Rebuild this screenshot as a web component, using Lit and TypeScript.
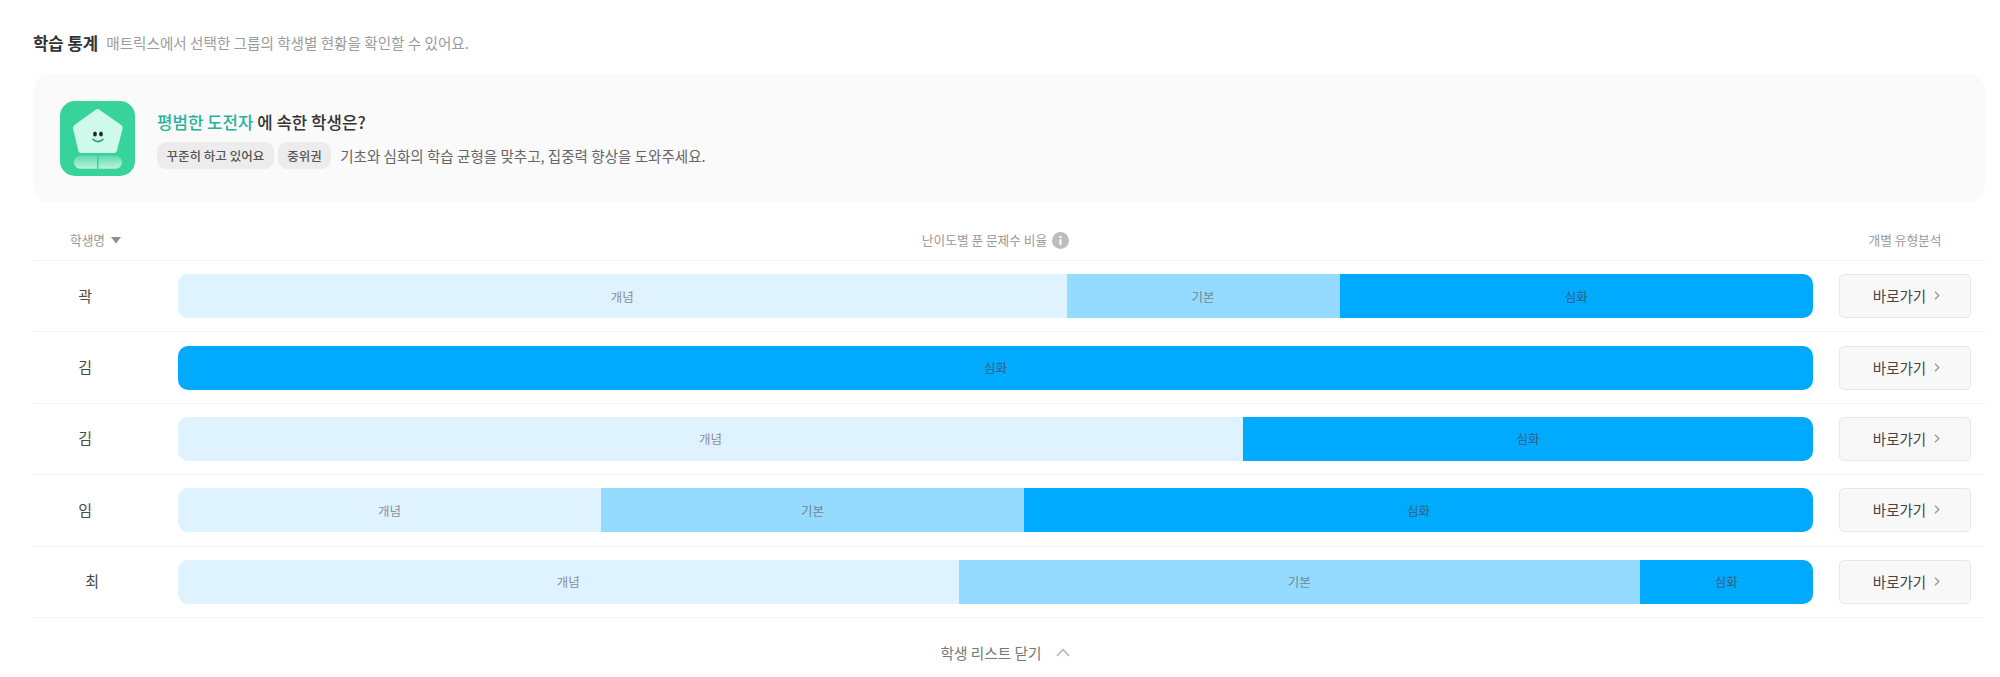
import { LitElement, css, html, svg } from 'lit'
import { customElement } from 'lit/decorators.js'

interface Segment {
  label: string
  level: 'low' | 'mid' | 'high'
  ratio: number
}

interface Student {
  name: string
  // width of the blanked-out part of the name, in characters
  masked: 1 | 2
  segments: Segment[]
}

const concept = (ratio: number): Segment => ({ label: '개념', level: 'low', ratio })
const basic = (ratio: number): Segment => ({ label: '기본', level: 'mid', ratio })
const deep = (ratio: number): Segment => ({ label: '심화', level: 'high', ratio })

const STUDENTS: Student[] = [
  { name: '곽', masked: 2, segments: [concept(54.35), basic(16.7), deep(28.95)] },
  { name: '김', masked: 2, segments: [deep(100)] },
  { name: '김', masked: 2, segments: [concept(65.15), deep(34.85)] },
  { name: '임', masked: 2, segments: [concept(25.87), basic(25.87), deep(48.26)] },
  { name: '최', masked: 1, segments: [concept(47.75), basic(41.65), deep(10.6)] },
]

const mascot = svg`
  <defs>
    <linearGradient id="foot" x1="0" y1="0" x2="0" y2="1">
      <stop offset="0" stop-color="#63dbb0" />
      <stop offset="1" stop-color="#b9f3dc" />
    </linearGradient>
  </defs>
  <rect width="75" height="75" rx="15" fill="#38d39b" />
  <path
    d="M35.6 8.8 Q37.5 7.4 39.4 8.8 L61.2 24 Q63 25.3 62.7 27.4 L56.8 50 Q56.3 52 54.2 52 L21 52 Q18.9 52 18.4 50 L13 27.4 Q12.7 25.3 14.5 24 Z"
    fill="#cff9ea"
  />
  <path d="M20.5 54.8 H37 V67.8 H20.5 A6.5 6.5 0 0 1 20.5 54.8 Z" fill="url(#foot)" />
  <path d="M38.5 54.8 H55.5 A6.5 6.5 0 0 1 55.5 67.8 H38.5 Z" fill="url(#foot)" />
  <ellipse cx="35" cy="33" rx="1.9" ry="2.6" fill="#1c2b28" />
  <ellipse cx="41" cy="33" rx="1.9" ry="2.6" fill="#1c2b28" />
  <path d="M33 38.4 Q38 42.8 43 38.4" fill="none" stroke="#1f9c78" stroke-width="1.5" stroke-linecap="round" />
`

@customElement('app-root')
export class AppRoot extends LitElement {
  static styles = css`
    :host {
      display: block;
      box-sizing: border-box;
      height: 677px;
      padding: 31px 15px 0 33px;
      background: #fff;
      font-family: 'Noto Sans CJK KR', 'Noto Sans', sans-serif;
      color: #333;
    }

    .title-row {
      display: flex;
      align-items: center;
      gap: 8px;
      height: 24px;
    }
    .title {
      font-size: 16.7px;
      font-weight: 700;
      color: #333;
    }
    .subtitle {
      margin-bottom: 2px;
      font-size: 14.6px;
      color: #9b9b9b;
    }

    .card {
      display: flex;
      align-items: center;
      gap: 22px;
      height: 129px;
      margin-top: 19px;
      padding-left: 27px;
      box-sizing: border-box;
      background: #fafafa;
      border-radius: 18px;
    }
    .mascot {
      display: block;
      width: 75px;
      height: 75px;
      flex: none;
    }
    .card-body {
      display: flex;
      flex-direction: column;
      gap: 6px;
    }
    .question {
      font-size: 16.8px;
      line-height: 28px;
      font-weight: 500;
      color: #333;
    }
    .question b {
      font-weight: 500;
      color: #26b39c;
    }
    .tags {
      display: flex;
      align-items: center;
      gap: 4px;
    }
    .tag {
      height: 27px;
      line-height: 27px;
      padding: 0 9.5px;
      border-radius: 9px;
      background: #ececec;
      font-size: 12.5px;
      font-weight: 500;
      color: #555;
    }
    .desc {
      margin-left: 5px;
      font-size: 14.55px;
      color: #666;
    }

    .head {
      display: grid;
      grid-template-columns: 145px 1fr 172px;
      align-items: center;
      padding: 27px 0 10px;
      border-bottom: 1px solid #f3f3f3;
      font-size: 12.7px;
      line-height: 20px;
      color: #999;
    }
    .head-name {
      display: flex;
      align-items: center;
      gap: 6px;
      padding-left: 37px;
    }
    .head-ratio {
      display: flex;
      align-items: center;
      justify-content: center;
      gap: 5px;
    }
    .head-type {
      padding-left: 38px;
      padding-right: 26px;
      text-align: center;
      white-space: nowrap;
    }

    .row {
      display: grid;
      grid-template-columns: 145px 1fr 172px;
      align-items: center;
      box-sizing: border-box;
      height: 71.4px;
      border-bottom: 1px solid #f3f3f3;
    }
    .name {
      margin-top: -2px;
      padding-right: 13px;
      text-align: center;
      font-size: 15px;
      color: #4a4a4a;
    }
    .mask {
      display: inline-block;
      width: 0.92em;
    }

    .bar {
      display: flex;
      height: 44px;
      border-radius: 10px;
      overflow: hidden;
    }
    .segment {
      display: flex;
      align-items: center;
      justify-content: center;
      font-size: 12.5px;
    }
    .low {
      background: #dff2ff;
      color: #8c9094;
    }
    .mid {
      background: #94dbff;
      color: #6f8796;
    }
    .high {
      background: #00aaff;
      color: #33607c;
    }

    .go {
      display: flex;
      align-items: center;
      justify-content: center;
      gap: 8px;
      box-sizing: border-box;
      width: 132px;
      height: 44px;
      margin-left: 26px;
      padding: 0 0 1px 3px;
      border: 1px solid #e8e8e8;
      border-radius: 5px;
      background: #f8f8f8;
      font-family: inherit;
      font-size: 14.5px;
      color: #444;
    }

    .close {
      display: flex;
      align-items: center;
      justify-content: center;
      gap: 14px;
      height: 70px;
      padding-right: 8px;
      font-size: 14.7px;
      color: #777;
    }
  `

  private renderRow(student: Student) {
    return html`
      <div class="row">
        <div class="name">
          ${student.name}${Array.from({ length: student.masked }, () => html`<span class="mask"></span>`)}
        </div>
        <div class="bar">
          ${student.segments.map(
            s => html`<div class="segment ${s.level}" style="width: ${s.ratio}%">${s.label}</div>`
          )}
        </div>
        <button class="go">
          바로가기
          <svg width="6" height="9" viewBox="0 0 6 9" fill="none" stroke="#999" stroke-width="1.3">
            <path d="M1 .8 4.8 4.5 1 8.2" />
          </svg>
        </button>
      </div>
    `
  }

  render() {
    return html`
      <div class="title-row">
        <span class="title">학습 통계</span>
        <span class="subtitle">매트릭스에서 선택한 그룹의 학생별 현황을 확인할 수 있어요.</span>
      </div>

      <div class="card">
        <svg class="mascot" viewBox="0 0 75 75">${mascot}</svg>
        <div class="card-body">
          <div class="question"><b>평범한 도전자</b> 에 속한 학생은?</div>
          <div class="tags">
            <span class="tag">꾸준히 하고 있어요</span>
            <span class="tag">중위권</span>
            <span class="desc">기초와 심화의 학습 균형을 맞추고, 집중력 향상을 도와주세요.</span>
          </div>
        </div>
      </div>

      <div class="head">
        <div class="head-name">
          학생명
          <svg width="10" height="7" viewBox="0 0 10 7"><path d="M0 0H10L5 6.5Z" fill="#8f8f8f" /></svg>
        </div>
        <div class="head-ratio">
          난이도별 푼 문제수 비율
          <svg width="17" height="17" viewBox="0 0 17 17">
            <circle cx="8.5" cy="8.5" r="8.5" fill="#bdbdbd" />
            <circle cx="8.5" cy="4.9" r="1.2" fill="#fff" />
            <rect x="7.5" y="7.2" width="2" height="6" rx="0.6" fill="#fff" />
          </svg>
        </div>
        <div class="head-type">개별 유형분석</div>
      </div>

      ${STUDENTS.map(s => this.renderRow(s))}

      <div class="close">
        학생 리스트 닫기
        <svg width="14" height="9" viewBox="0 0 14 9" fill="none" stroke="#bbb" stroke-width="1.8">
          <path d="M1 8 7 1.5 13 8" />
        </svg>
      </div>
    `
  }
}
